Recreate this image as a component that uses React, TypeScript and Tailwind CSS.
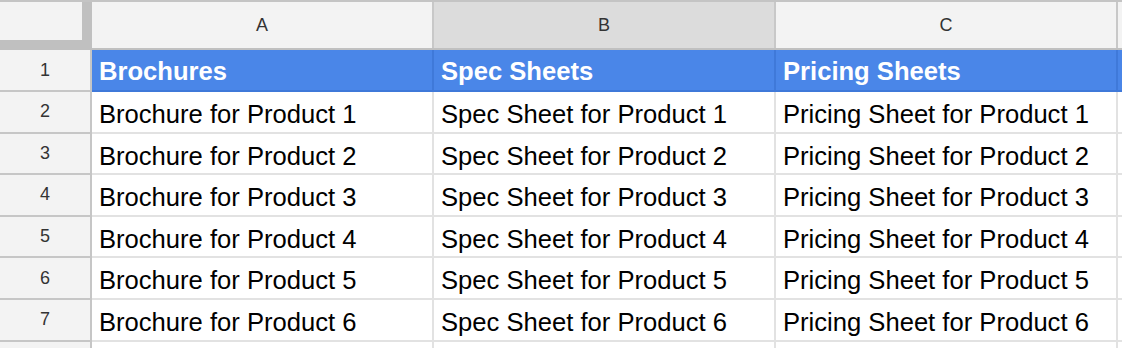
import React from 'react';

const columns = ['A', 'B', 'C'];

const headers = ['Brochures', 'Spec Sheets', 'Pricing Sheets'];

const rows = [1, 2, 3, 4, 5, 6].map((n) => [
  `Brochure for Product ${n}`,
  `Spec Sheet for Product ${n}`,
  `Pricing Sheet for Product ${n}`,
]);

const RowNumber: React.FC<{ n?: number; h: string }> = ({ n, h }) => (
  <div
    className={`${h} w-[92px] shrink-0 flex items-center justify-center bg-[#f3f3f3] border-r-2 border-b-2 border-[#c6c6c6] text-[18px] text-[#333333]`}
  >
    {n}
  </div>
);

const App: React.FC = () => {
  return (
    <div className="w-[1122px] h-[348px] overflow-hidden bg-white font-['Liberation_Sans',Arial,sans-serif] border-t-2 border-[#c4c4c4]">
      {/* Column headers */}
      <div className="flex h-[48px] border-b-2 border-[#c0c0c0]">
        <div className="w-[92px] shrink-0 bg-[#c0c0c0]">
          <div className="w-[82px] h-[38px] bg-[#f3f3f3]" />
        </div>
        {columns.map((c) => (
          <div
            key={c}
            className={`w-[342px] shrink-0 flex items-center justify-center border-r-2 border-[#c8c8c8] text-[18px] text-[#333333] ${
              c === 'B' ? 'bg-[#dcdcdc]' : 'bg-[#f3f3f3]'
            }`}
          >
            {c}
          </div>
        ))}
        <div className="flex-1 bg-[#f3f3f3]" />
      </div>

      {/* Row 1: header row */}
      <div className="flex">
        <RowNumber n={1} h="h-[42px]" />
        {headers.map((t) => (
          <div
            key={t}
            className="w-[342px] h-[42px] shrink-0 flex items-center pt-[2px] pl-[7px] bg-[#4a86e8] border-r-2 border-b-2 border-[#3f79d9] text-white font-bold text-[25.6px] whitespace-nowrap"
          >
            {t}
          </div>
        ))}
        <div className="flex-1 h-[42px] bg-[#4a86e8] border-b-2 border-[#3f79d9]" />
      </div>

      {/* Data rows */}
      {rows.map((cells, i) => (
        <div key={i} className="flex">
          <RowNumber n={i + 2} h="h-[41.6px]" />
          {cells.map((t) => (
            <div
              key={t}
              className="w-[342px] h-[41.6px] shrink-0 flex items-center pt-[5px] pl-[7px] border-r-2 border-b-2 border-[#e2e2e2] text-black text-[25.6px] whitespace-nowrap"
            >
              {t}
            </div>
          ))}
          <div className="flex-1 h-[41.6px] border-b-2 border-[#e2e2e2]" />
        </div>
      ))}

      {/* Partially visible row 8 */}
      <div className="flex">
        <RowNumber h="h-[41.6px]" />
        {columns.map((c) => (
          <div key={c} className="w-[342px] h-[41.6px] shrink-0 border-r-2 border-b-2 border-[#e2e2e2]" />
        ))}
      </div>
    </div>
  );
};

export default App;
